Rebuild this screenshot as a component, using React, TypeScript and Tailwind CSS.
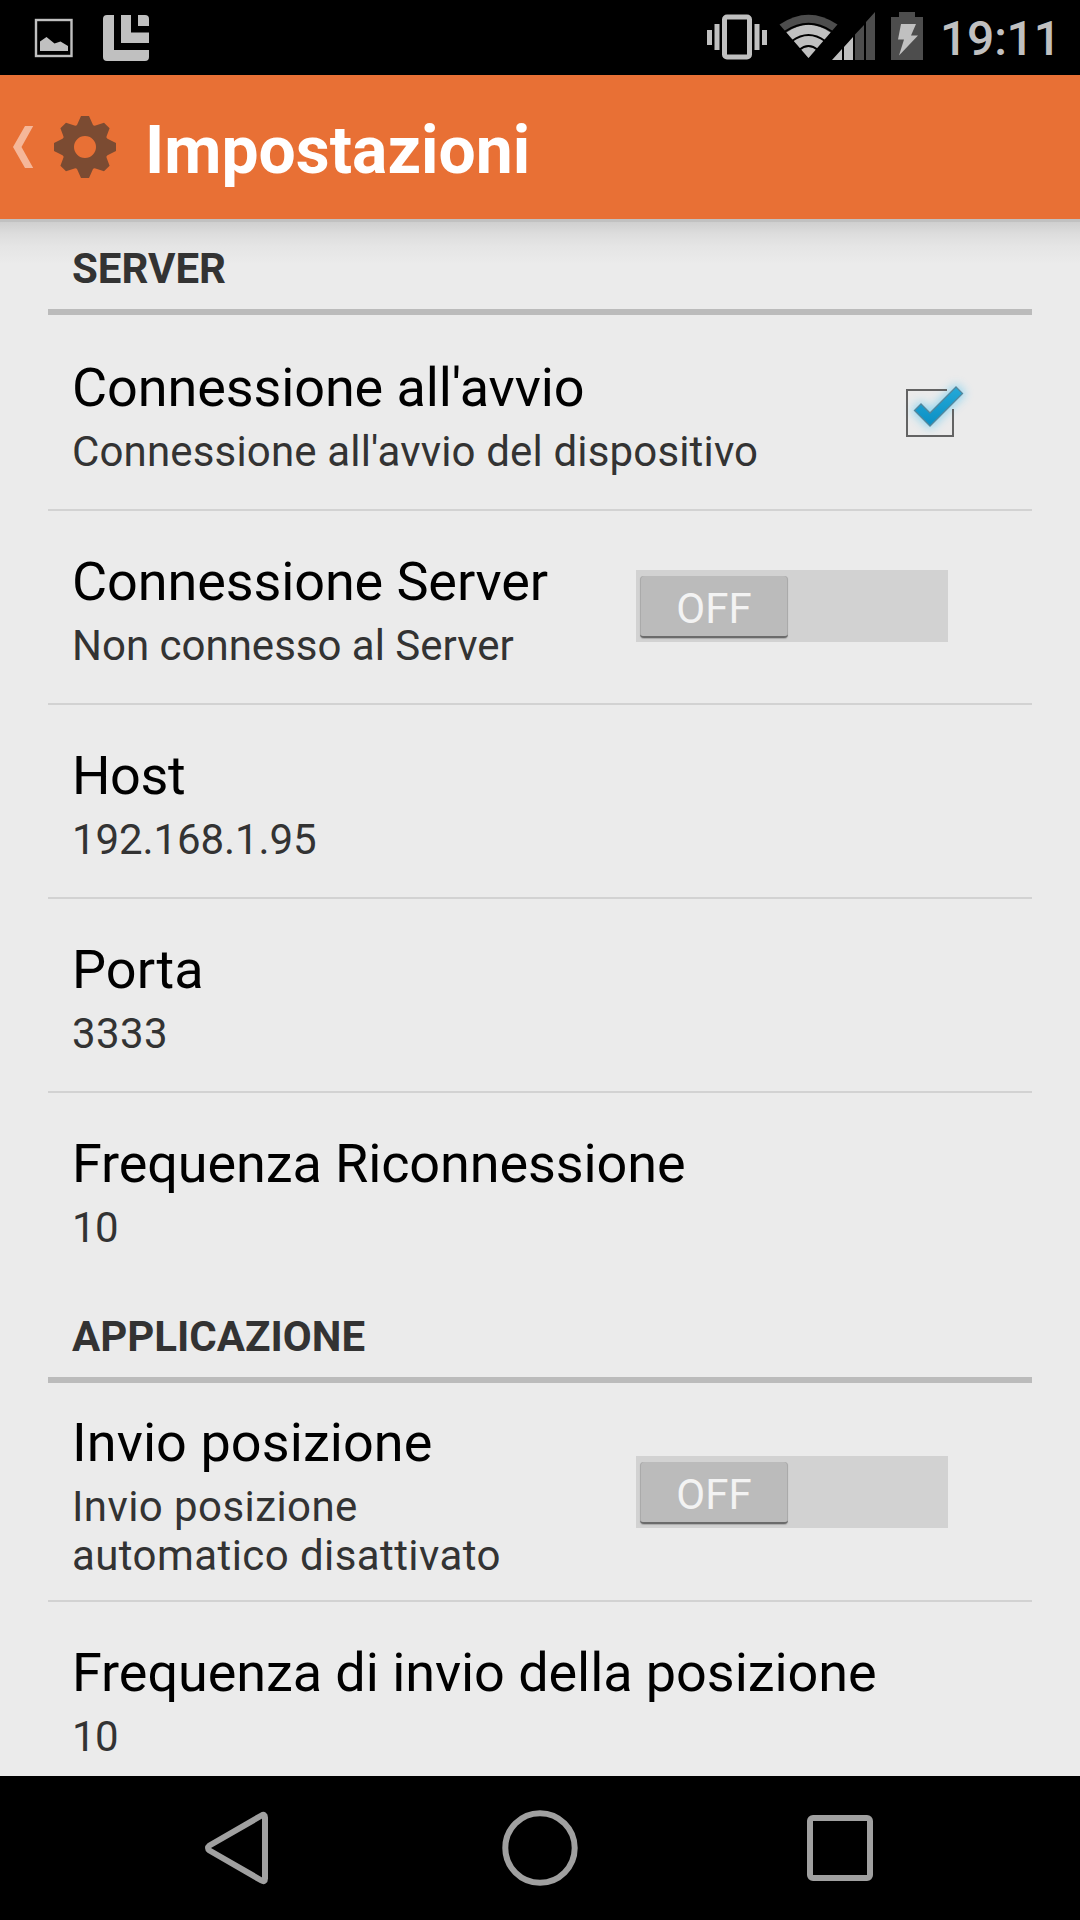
import React from "react";

function StatusBar() {
  return (
    <div className="flex h-[75px] items-start bg-black">
      <svg className="ml-[30px] shrink-0" width="130" height="75" viewBox="30 0 130 75" fill="#c0c0c0">
        <rect x="36" y="20" width="35.5" height="36" fill="none" stroke="#c0c0c0" strokeWidth="2.4" />
        <path d="M40 51V41.5L46.5 37L54.5 43.5L60.5 41.5L68 46V51Z" />
        <path d="M107 15H114V50H149V57Q149 61 145 61H107Q103 61 103 57V19Q103 15 107 15Z" />
        <path d="M121 15H131V32.500H149V43H121Z" />
        <path d="M138 15H145Q149 15 149 19V26H138Z" />
      </svg>
      <div className="grow" />
      <svg className="shrink-0" width="240" height="75" viewBox="700 0 240 75" fill="#c0c0c0">
        <rect x="724.500" y="17" width="25" height="40" rx="2.500" fill="none" stroke="#c0c0c0" strokeWidth="5" />
        <rect x="707" y="30" width="5" height="15" />
        <rect x="714.500" y="24" width="5" height="26" />
        <rect x="754.500" y="24" width="5" height="26" />
        <rect x="762" y="30" width="5" height="15" />
        <path d="M779.500 24.500Q808.500 5 837.500 24.500L808.500 58Z" fill="#4d4d4d" />
        <path d="M786.500 32.500Q808.500 17 830.500 32.500L808.500 58Z" />
        <g fill="none" stroke="#000" strokeWidth="2">
          <path d="M785 31.500Q808.500 16 832 31.500" />
          <path d="M792 41Q808.500 29 825 41" />
          <path d="M799 50Q808.500 42 818 50" />
        </g>
        <path d="M832 60L842 49V60ZM844 60V47L853 37V60Z" />
        <path d="M855 60V34.500L864 25V60ZM866 60V22L875 12V60Z" fill="#4d4d4d" />
        <path d="M891 60V17H899V12H915V17H923V60Z" fill="#4d4d4d" />
        <path d="M901 24H916L911 35.500H918L899 55.500L904 39.500H898Z" />
      </svg>
      <div className="mt-[6px] mr-[20px] w-[120px] text-right text-[48px] leading-[66px] font-medium tracking-[-0.2px] text-[#c0c0c0]">19:11</div>
    </div>
  );
}

const GEAR =
  "M-4 -31H4L8 -22Q9 -21 10.500 -21.500L19 -24.300L24.600 -18.700L21.500 -10.500Q21 -9 22.500 -8.200L31 -4V4L22.500 8.200Q21 9 21.500 10.500L24.600 18.700L19 24.300L10.500 21.500Q9 21 8 22L4 31H-4L-8 22Q-9 21 -10.500 21.500L-19 24.300L-24.600 18.700L-21.500 10.500Q-21 9 -22.500 8.200L-31 4V-4L-22.500 -8.200Q-21 -9 -21.500 -10.500L-24.600 -18.700L-19 -24.300L-10.500 -21.500Q-9 -21 -8 -22ZM-11 0A11 11 0 0 0 11 0A11 11 0 0 0 -11 0Z";

function ActionBar() {
  return (
    <div className="flex h-[144px] items-center bg-[#e87035]">
      <svg className="shrink-0" width="145" height="144" viewBox="0 0 145 144">
        <path d="M13 72L25 51H33.200L21.500 72L33.200 93H25Z" fill="#f5b799" />
        <path d={GEAR} transform="translate(85 72)" fill="#7b4b32" fillRule="evenodd" />
      </svg>
      <h1 className="mt-[8px] text-[66px] leading-[78px] font-bold whitespace-nowrap text-white">Impostazioni</h1>
    </div>
  );
}

function Category({ title }: { title: string }) {
  return (
    <h2 className="mb-[2px] flex h-[96px] flex-col border-b-[6px] border-[#bbbbbb] pt-[25px] pl-[24px] text-[42px] leading-[49px] font-bold text-[#333333]">
      {title}
    </h2>
  );
}

function Switch() {
  return (
    <div className="flex h-[72px] w-[312px] bg-[#d2d2d2] pt-[6px] pl-[4px]">
      <div className="h-[62px] w-[148px] rounded-[4px] border-b-2 border-[#6b6b6b] bg-[#bbbbbb] pt-[8px] text-center text-[42px] leading-[49px] text-[#f3f3f3] shadow-[0_1px_1px_#8888,inset_1px_0_0_#aaa,inset_-1px_0_0_#aaa]">
        OFF
      </div>
    </div>
  );
}

function Checkbox() {
  return (
    <svg width="96" height="96" viewBox="880 365 96 96">
      <defs>
        <linearGradient id="tick" x1="0" y1="0" x2="0" y2="1">
          <stop offset="0" stopColor="#25a9d8" />
          <stop offset="1" stopColor="#0a8fc4" />
        </linearGradient>
        <filter id="glow" x="-50%" y="-50%" width="200%" height="200%">
          <feGaussianBlur stdDeviation="5" />
        </filter>
      </defs>
      <path
        d="M914 410.500L921 403.500L930 412.500L956 386.500L963 393.500L930 426.500Z"
        fill="#7fd0f0"
        stroke="#7fd0f0"
        strokeWidth="4"
        opacity="0.850"
        filter="url(#glow)"
      />
      <path d="M947 390H907V436H953V409" fill="none" stroke="#636363" strokeWidth="2" />
      <path d="M914.500 410.500L921 404L930 413L956 387L962.500 393.500L930 426Z" fill="url(#tick)" stroke="#54879c" strokeWidth="1.300" />
    </svg>
  );
}

interface RowProps {
  title: string;
  summary: string;
  className?: string;
  textClass?: string;
  titleClass?: string;
  summaryClass?: string;
  last?: boolean;
  children?: React.ReactNode;
}

function Row({
  title,
  summary,
  className = "h-[194px] pt-[39px]",
  textClass = "",
  titleClass = "tracking-[-0.11px]",
  summaryClass = "",
  last,
  children,
}: RowProps) {
  return (
    <div className={`flex items-start justify-between border-b-2 pl-[24px] ${last ? "border-transparent" : "border-[#d2d2d2]"} ${className}`}>
      <div className={textClass}>
        <div className={`text-[54px] leading-[64px] whitespace-nowrap text-black ${titleClass}`}>{title}</div>
        <div className={`mt-[7px] text-[42px] leading-[49px] text-[#333333] ${summaryClass}`}>{summary}</div>
      </div>
      {children}
    </div>
  );
}

function NavBar() {
  return (
    <div className="flex h-[144px] items-center justify-between bg-black px-[190px]">
      <svg width="100" height="100" viewBox="0 0 100 100" fill="none" stroke="#a0a0a0" strokeWidth="6" strokeLinejoin="round">
        <path d="M19.500 47.500L71.500 17.500Q75 15.500 75 19.500V80.500Q75 84.500 71.500 82.500L19.500 52.500Q16.500 50 19.500 47.500Z" />
      </svg>
      <svg width="100" height="100" viewBox="0 0 100 100" fill="none" stroke="#a0a0a0" strokeWidth="6">
        <circle cx="50" cy="50" r="34.700" />
      </svg>
      <svg width="100" height="100" viewBox="0 0 100 100" fill="none" stroke="#a0a0a0" strokeWidth="6">
        <rect x="20" y="20" width="60" height="60" rx="3" />
      </svg>
    </div>
  );
}

export default function App() {
  return (
    <div className="flex h-[1920px] w-[1080px] flex-col overflow-hidden bg-[#ebebeb] font-[Roboto,sans-serif]">
      <StatusBar />
      <ActionBar />
      <main className="h-[1557px] overflow-hidden border-t-[3px] border-[#c1c1c1] bg-[linear-gradient(to_bottom,#cfcfcf_0,#dddddd_12px,#e5e5e5_24px,#ebebeb_42px)] px-[48px]">
        <div className="-mt-[3px]">
          <Category title="SERVER" />
          <Row title="Connessione all'avvio" summary="Connessione all'avvio del dispositivo" summaryClass="tracking-[0.16px]">
            <div className="mt-[9px] mr-[56px]">
              <Checkbox />
            </div>
          </Row>
          <Row title="Connessione Server" summary="Non connesso al Server">
            <div className="mt-[20px] mr-[84px]">
              <Switch />
            </div>
          </Row>
          <Row title="Host" summary="192.168.1.95" titleClass="tracking-[-0.4px]" summaryClass="tracking-[-0.1px]" />
          <Row title="Porta" summary="3333" titleClass="tracking-[0.1px]" summaryClass="tracking-[0.4px]" />
          <Row title="Frequenza Riconnessione" summary="10" summaryClass="tracking-[-0.5px]" last />
          <Category title="APPLICAZIONE" />
          <Row
            title="Invio posizione"
            summary="Invio posizione automatico disattivato"
            className="h-[217px] pt-[26px]"
            textClass="w-[450px]"
            titleClass="tracking-[0.08px]"
            summaryClass="tracking-[0.42px]"
          >
            <div className="mt-[45px] mr-[84px]">
              <Switch />
            </div>
          </Row>
          <Row title="Frequenza di invio della posizione" summary="10" titleClass="tracking-[-0.07px]" summaryClass="tracking-[-0.5px]" />
        </div>
      </main>
      <NavBar />
    </div>
  );
}
